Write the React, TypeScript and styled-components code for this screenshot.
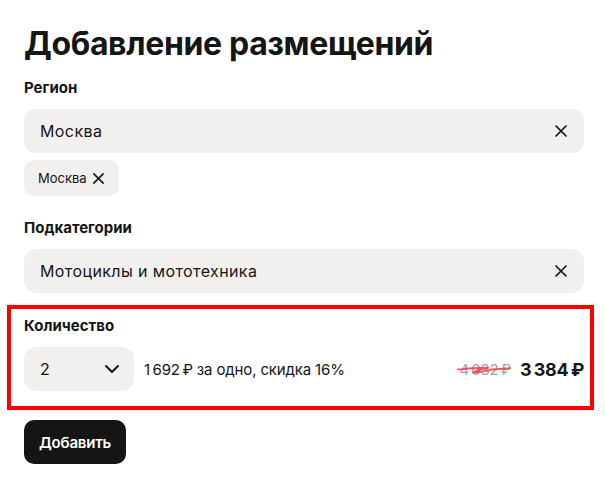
import React, { useState } from "react";
import styled, { createGlobalStyle } from "styled-components";

const GlobalStyle = createGlobalStyle`
  body {
    margin: 0;
    background: #ffffff;
    font-family: Inter, "Noto Sans", "Liberation Sans", sans-serif;
    color: #151515;
  }
`;

const Page = styled.div`
  width: 605px;
  box-sizing: border-box;
  padding: 24px 21px 0 24px;
  display: flex;
  flex-direction: column;
`;

const Title = styled.h1`
  margin: 0 0 14px;
  font-size: 32px;
  line-height: 40px;
  font-weight: 700;
  letter-spacing: -0.35px;
`;

const Label = styled.div`
  font-size: 15px;
  line-height: 20px;
  font-weight: 700;
  margin-bottom: 11px;
`;

const Field = styled.div`
  height: 44px;
  border-radius: 12px;
  background: #f1f0ee;
  display: flex;
  align-items: center;
  justify-content: space-between;
  padding: 0 16px;
  font-size: 16px;
  letter-spacing: 0.4px;
`;

const IconButton = styled.button`
  border: 0;
  background: none;
  padding: 0;
  display: flex;
  align-items: center;
  color: #151515;
  cursor: pointer;
`;

const Chips = styled.div`
  display: flex;
  gap: 8px;
  margin: 7px 0 22px;
`;

const Chip = styled.div`
  height: 36px;
  border-radius: 10px;
  background: #f1f0ee;
  display: flex;
  align-items: center;
  gap: 5px;
  padding: 0 14px;
  font-size: 13px;
`;

const Section = styled.section`
  margin: 12px -10px 10px -17px;
  border: 4px solid #ff0000;
  padding: 7px 6px 15px 13px;
`;

const Row = styled.div`
  display: flex;
  align-items: center;
  gap: 10px;
`;

const Select = styled.div`
  width: 110px;
  height: 44px;
  box-sizing: border-box;
  border-radius: 12px;
  background: #f1f0ee;
  display: flex;
  align-items: center;
  justify-content: space-between;
  padding: 0 14px 0 16px;
  font-size: 16px;
`;

const Unit = styled.div`
  font-size: 15px;
  letter-spacing: -0.15px;
  flex: 1;
`;

const Prices = styled.div`
  display: flex;
  align-items: center;
  gap: 9px;
`;

const OldPrice = styled.span`
  position: relative;
  font-size: 15px;
  letter-spacing: -0.3px;
  color: #a3a3a3;
`;

const Scribble = styled.svg`
  position: absolute;
  left: -2px;
  top: 3px;
  width: 54px;
  height: 14px;
  overflow: visible;
`;

const Price = styled.span`
  font-size: 18px;
  font-weight: 700;
  letter-spacing: -0.3px;
`;

const Submit = styled.button`
  align-self: flex-start;
  height: 44px;
  padding: 0 15px;
  border: 0;
  border-radius: 10px;
  background: #151515;
  color: #ffffff;
  font-family: inherit;
  font-size: 15px;
  font-weight: 600;
  letter-spacing: -0.2px;
  cursor: pointer;
`;

const Cross = ({ size = 14 }: { size?: number }) => (
  <svg width={size} height={size} viewBox="0 0 14 14" fill="none">
    <path d="M2 2L12 12M12 2L2 12" stroke="currentColor" strokeWidth="1.7" strokeLinecap="round" />
  </svg>
);

const App: React.FC = () => {
  const [count] = useState(2);
  return (
    <>
      <GlobalStyle />
      <Page>
        <Title>Добавление размещений</Title>

        <Label>Регион</Label>
        <Field>
          Москва
          <IconButton>
            <Cross />
          </IconButton>
        </Field>
        <Chips>
          <Chip>
            Москва
            <Cross size={13} />
          </Chip>
        </Chips>

        <Label>Подкатегории</Label>
        <Field>
          Мотоциклы и мототехника
          <IconButton>
            <Cross />
          </IconButton>
        </Field>

        <Section>
          <Label>Количество</Label>
          <Row>
            <Select>
              {count}
              <svg width="16" height="10" viewBox="0 0 16 10" fill="none">
                <path d="M2 2L8 8L14 2" stroke="#151515" strokeWidth="2" strokeLinecap="round" strokeLinejoin="round" />
              </svg>
            </Select>
            <Unit>1{"\u2009"}692{"\u2009"}₽ за одно, скидка 16%</Unit>
            <Prices>
              <OldPrice>
                4{"\u2009"}032{"\u2009"}₽
                <Scribble viewBox="0 0 54 14" fill="none">
                  <path
                    d="M1 6.5C12 5.5 22 4.5 31 4.8C24 6 18 8 16 9.5C24 9 30 7.5 35 6.5C42 6 49 5.5 53 5.2"
                    stroke="#f0384a"
                    strokeOpacity="0.85"
                    strokeWidth="1.8"
                    strokeLinecap="round"
                    strokeLinejoin="round"
                  />
                </Scribble>
              </OldPrice>
              <Price>3{"\u2009"}384{"\u2009"}₽</Price>
            </Prices>
          </Row>
        </Section>

        <Submit>Добавить</Submit>
      </Page>
    </>
  );
};

export default App;
